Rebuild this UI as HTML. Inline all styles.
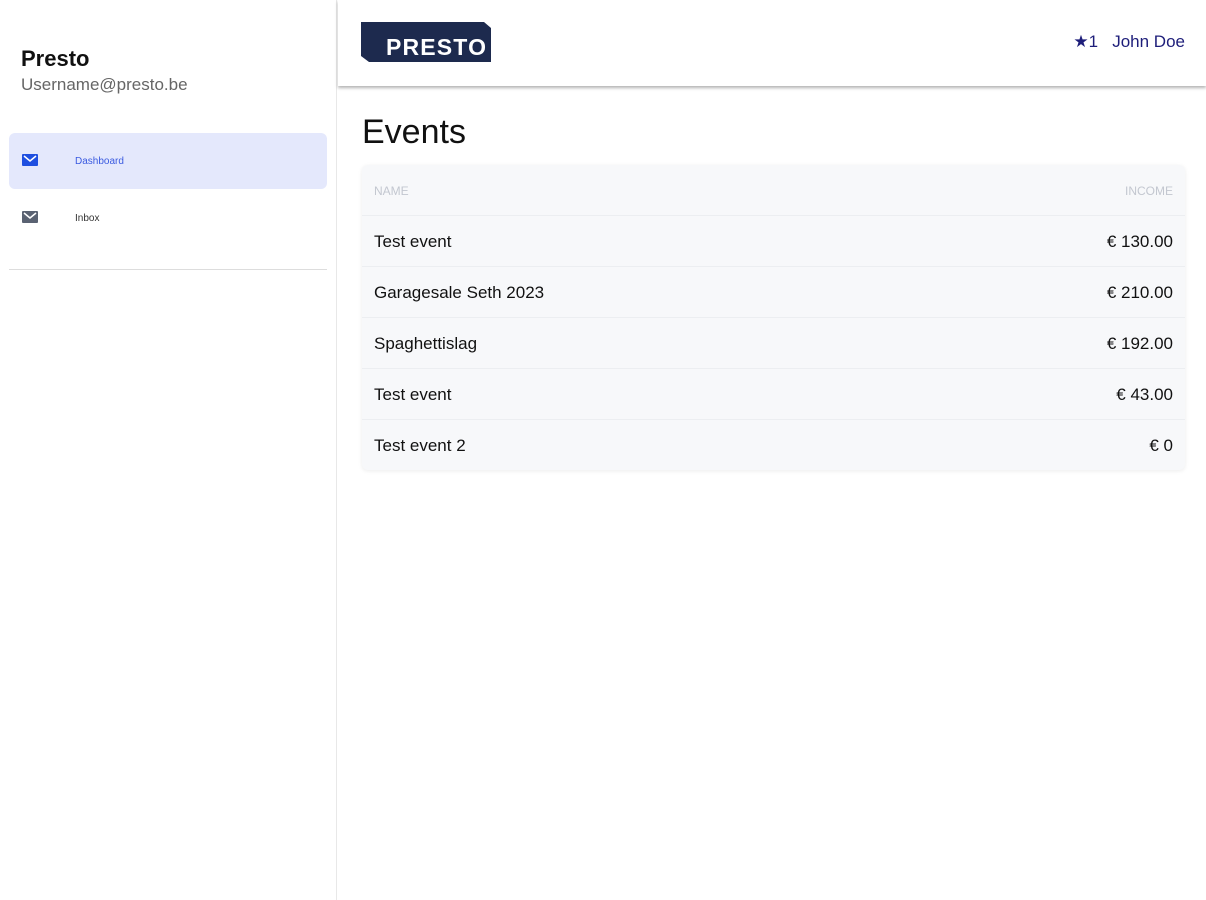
<!DOCTYPE html>
<html><head><meta charset="utf-8"><style>
*{box-sizing:border-box;margin:0;padding:0}
body{width:1206px;height:900px;background:#fff;font-family:"Liberation Sans",Arial,sans-serif;position:relative;overflow:hidden}
.side{position:absolute;left:0;top:0;width:337px;height:900px;border-right:1px solid #e8e8e8}
.t1{position:absolute;left:21px;top:46px;font-size:22px;color:#111;font-weight:bold;-webkit-text-stroke:0}
.t2{position:absolute;left:21px;top:75px;font-size:17px;color:#666}
.nav{position:absolute;left:9px;width:318px;height:56px}
.nav svg{position:absolute;left:13px;top:21px}
.nav .lb{position:absolute;left:66px;top:23px;font-size:10px}
.sep{position:absolute;left:9px;top:269px;width:318px;height:1px;background:#ddd}
.top{position:absolute;left:338px;top:0;width:868px;height:86px;background:#fff;box-shadow:0 2px 3px rgba(0,0,0,.3)}
.logo{position:absolute;left:23px;top:22px}
.user{position:absolute;right:21px;top:32px;font-size:17px;color:#1e1e7a}
h1{position:absolute;left:362px;top:113px;font-size:34px;font-weight:normal;color:#111}
.card{position:absolute;left:362px;top:165px;width:823px;height:305px;background:#f7f8fa;border-radius:6px;box-shadow:0 1px 4px rgba(0,0,0,.08)}
.row{height:51px;border-top:1px solid #eceef1;display:flex;justify-content:space-between;align-items:center;padding:2px 12px 0;font-size:17px;color:#111}
.row.h{border-top:none;height:50px;font-size:12px;color:#c3c7d0}
</style></head><body>
<div class="side">
<div class="t1" style="font-weight:600">Presto</div>
<div class="t2">Username@presto.be</div>
<div class="nav" style="top:133px;background:#e4e8fc;border-radius:6px"><svg width="16" height="12"><rect width="16" height="12" rx="1" fill="#1f4fe0"/><path d="M2 2 L8 7 L14 2" stroke="#fff" stroke-width="1.5" fill="none"/></svg><div class="lb" style="color:#3a5ae0">Dashboard</div></div>
<div class="nav" style="top:190px"><svg width="16" height="12"><rect width="16" height="12" rx="1" fill="#5a6272"/><path d="M2 2 L8 7 L14 2" stroke="#fff" stroke-width="1.5" fill="none"/></svg><div class="lb" style="color:#333">Inbox</div></div>
<div class="sep"></div>
</div>
<div class="top">
<svg class="logo" width="131" height="40" viewBox="0 0 131 40"><polygon points="0,0 123,0 130,6 130,40 8,40 0,34" fill="#1d2a4e"/><text x="25" y="33" font-family="Liberation Sans" font-weight="bold" font-size="23" fill="#fff" textLength="100">PRESTO</text></svg>
<div class="user">★1 &nbsp; John Doe</div>
</div>
<h1>Events</h1>
<div class="card">
<div class="row h"><span>NAME</span><span>INCOME</span></div>
<div class="row"><span>Test event</span><span>€ 130.00</span></div>
<div class="row"><span>Garagesale Seth 2023</span><span>€ 210.00</span></div>
<div class="row"><span>Spaghettislag</span><span>€ 192.00</span></div>
<div class="row"><span>Test event</span><span>€ 43.00</span></div>
<div class="row"><span>Test event 2</span><span>€ 0</span></div>
</div>
</body></html>
